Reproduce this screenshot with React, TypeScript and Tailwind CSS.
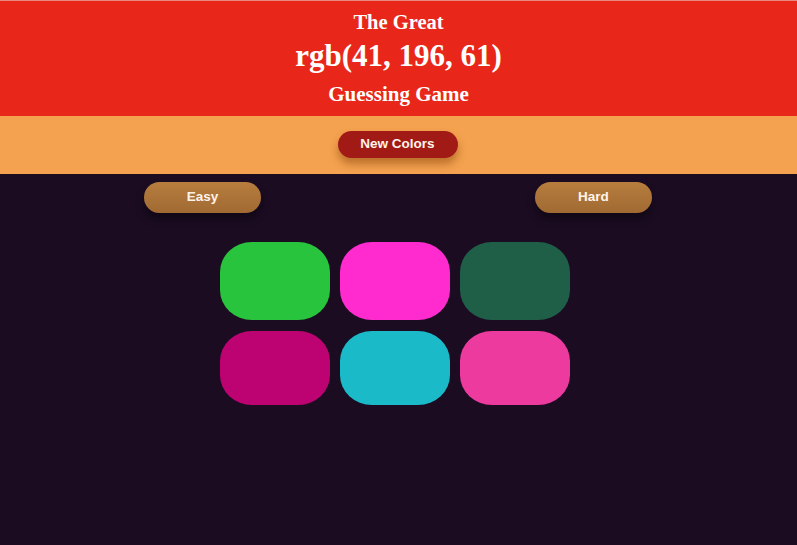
const squares = [
  "#29c43d",
  "#ff2bcf",
  "#1f5f48",
  "#bd0371",
  "#1bbac9",
  "#ec3a9f",
];

export default function App() {
  return (
    <div className="min-h-[545px] bg-[#1b0c22] border-t border-[#e9887e]">
      <header className="bg-[#e8271a] text-center text-white h-[115px] pt-[8px] font-['Liberation_Serif',serif] font-bold">
        <h1 className="text-[20.5px] leading-[26px]">The Great</h1>
        <div className="text-[31px] leading-[40px] mt-[1px]">rgb(41, 196, 61)</div>
        <h1 className="text-[21px] leading-[26px] mt-[5px]">Guessing Game</h1>
      </header>
      <div className="bg-[#f4a24f] h-[58px] flex justify-center pt-[15px]">
        <button className="w-[120px] h-[27px] -translate-x-[1px] rounded-full bg-[#a11a16] text-[#fff3ea] text-[13.5px] font-bold font-['Liberation_Sans',sans-serif] shadow-[0_6px_8px_rgba(120,50,0,0.45)]">
          New Colors
        </button>
      </div>
      <div className="flex justify-between pl-[144px] pr-[145px] pt-[8px] font-['Liberation_Sans',sans-serif]">
        <button className="w-[117px] h-[31px] rounded-full bg-gradient-to-b from-[#b77d3e] to-[#a06a32] text-[#fff3ea] text-[13.5px] font-bold shadow-[0_6px_8px_rgba(0,0,0,0.4)]">
          Easy
        </button>
        <button className="w-[117px] h-[31px] rounded-full bg-gradient-to-b from-[#b77d3e] to-[#a06a32] text-[#fff3ea] text-[13.5px] font-bold shadow-[0_6px_8px_rgba(0,0,0,0.4)]">
          Hard
        </button>
      </div>
      <div className="mx-auto mt-[29px] w-[350px] grid grid-cols-3 gap-x-[10px] gap-y-[11px] -translate-x-[4px]">
        {squares.map((c, i) => (
          <div
            key={i}
            className={`w-[110px] ${i < 3 ? "h-[78px]" : "h-[74px]"} rounded-[32px_/_30px]`}
            style={{ backgroundColor: c }}
          />
        ))}
      </div>
    </div>
  );
}
